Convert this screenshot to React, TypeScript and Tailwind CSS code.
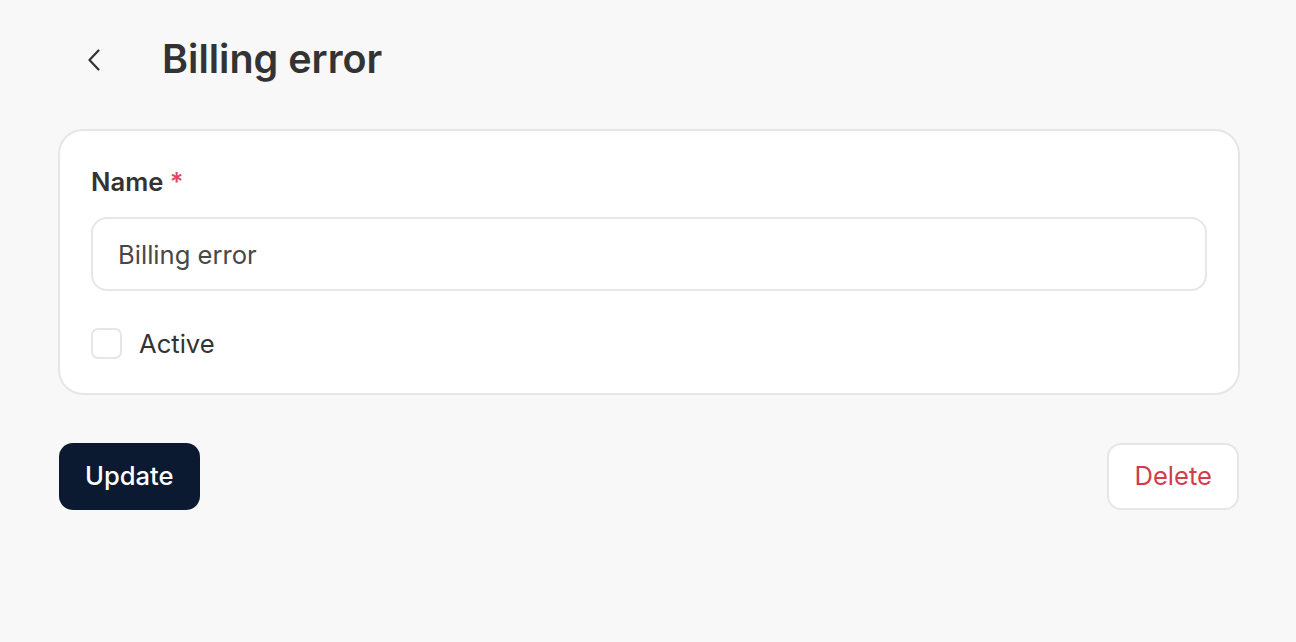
import { useState } from 'react';

export default function App() {
  const [name, setName] = useState('Billing error');
  const [active, setActive] = useState(false);

  return (
    <div className="min-h-screen bg-[#f8f8f8] pl-[58px] pr-[56px] font-['Inter',sans-serif] text-[#333333]">
      <div className="flex h-[120px] items-center">
        <button className="ml-[16px] flex h-[40px] w-[40px] items-center justify-center">
          <svg width="16" height="22" viewBox="0 0 16 22" fill="none">
            <path d="M12.5 1.5 L3.5 11 L12.5 20.5" stroke="#333333" strokeWidth="2.2" strokeLinecap="round" strokeLinejoin="round" />
          </svg>
        </button>
        <h1 className="ml-[48px] text-[39.5px] font-semibold leading-none">Billing error</h1>
      </div>

      <div className="mt-[9px] rounded-[25px] border-2 border-[#e6e6e6] bg-white px-[31px] pt-[31px] pb-[34px]">
        <label className="block text-[25.6px] font-semibold leading-[40px]">
          Name <span className="text-[#e0485f]">*</span>
        </label>
        <input
          value={name}
          onChange={e => setName(e.target.value)}
          className="mt-[15px] block h-[74px] w-full rounded-[16px] border-2 border-[#e6e6e6] px-[25px] text-[25.6px] text-[#484848] outline-none"
        />
        <label className="mt-[37px] flex items-center gap-[17px]">
          <input
            type="checkbox"
            checked={active}
            onChange={e => setActive(e.target.checked)}
            className="h-[31px] w-[31px] appearance-none rounded-[7px] border-2 border-[#e6e6e6] bg-white"
          />
          <span className="text-[25.6px] leading-none">Active</span>
        </label>
      </div>

      <div className="mt-[48px] flex items-center justify-between pl-[1px] pr-[1px]">
        <button className="h-[67px] rounded-[14px] bg-[#0b1a30] px-[26px] text-[25.6px] font-medium text-white">
          Update
        </button>
        <button className="h-[67px] rounded-[14px] border-2 border-[#e6e6e6] bg-white px-[25px] text-[25.6px] text-[#d43b4b]">
          Delete
        </button>
      </div>
    </div>
  );
}
